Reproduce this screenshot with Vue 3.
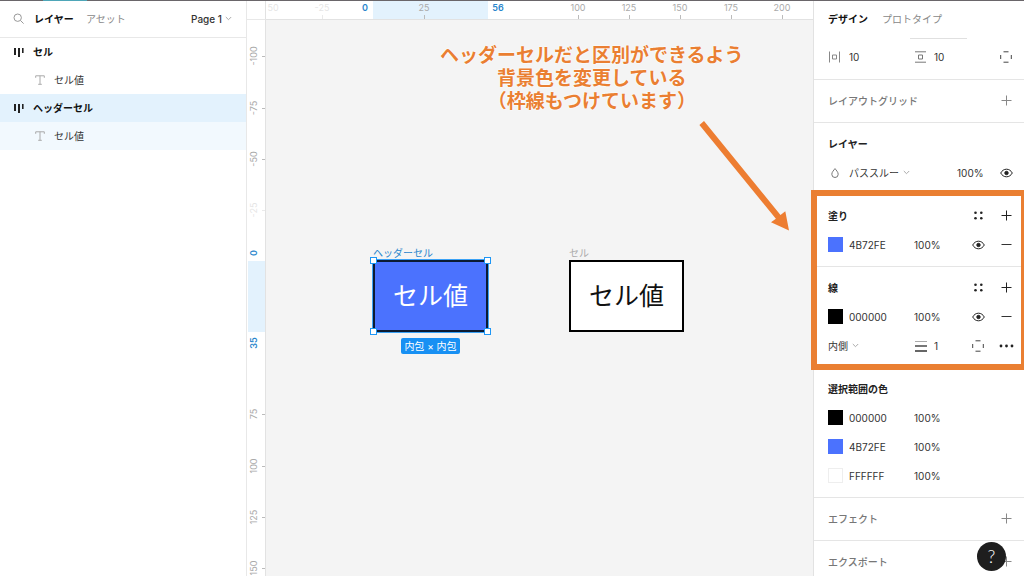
<script setup>
const layers = [
  { name: 'セル', type: 'frame', state: '' },
  { name: 'セル値', type: 'text', state: '' },
  { name: 'ヘッダーセル', type: 'frame', state: 'selected' },
  { name: 'セル値', type: 'text', state: 'within' },
]

const scale = 2.046
const originX = 107
const originY = 241
const columnMarks = [-25, 25, 100, 125, 150, 175, 200].map((v) => ({
  v,
  at: Math.round(originX + v * scale),
  faint: v < 0,
}))
const rowMarks = [-100, -75, -50, -25, 75, 100, 125, 150].map((v) => ({
  v,
  at: Math.round(originY + v * scale),
  faint: v === -25,
}))

const paints = [
  { title: '塗り', hex: '4B72FE', tone: 'blue' },
  { title: '線', hex: '000000', tone: 'black' },
]
const selectionColors = [
  { hex: '000000', tone: 'black' },
  { hex: '4B72FE', tone: 'blue' },
  { hex: 'FFFFFF', tone: 'white' },
]
</script>

<template>
  <div class="app">
    <div class="topline"><span></span></div>

    <div class="workspace">
      <aside class="layers">
        <header class="layers-head">
          <button class="plain search" aria-label="検索">
            <svg width="12" height="12" viewBox="0 0 12 12" fill="none" stroke="#999"><circle cx="4.7" cy="4.7" r="3.7" /><path d="M7.5 7.5 10.6 10.6" /></svg>
          </button>
          <button class="plain tab active">レイヤー</button>
          <button class="plain tab">アセット</button>
          <button class="plain page">
            Page 1
            <svg width="7" height="5" viewBox="0 0 7 5" fill="none" stroke="#aaa"><path d="M.8 1 3.5 3.7 6.2 1" /></svg>
          </button>
        </header>
        <ul class="tree">
          <li v-for="(l, i) in layers" :key="i">
            <button class="plain layer" :class="[l.type, l.state]">
              <svg v-if="l.type === 'frame'" width="10" height="10" viewBox="0 0 10 10" fill="#222"><path d="M0 1h2v7H0zM4 1h2v9H4zM8 1h1.6v5H8z" /></svg>
              <svg v-else width="10" height="10" viewBox="0 0 10 10" fill="none" stroke="#aaa"><path d="M.7 2.8V.8h8.6v2M5 .8v8.4M3.2 9.3h3.6" /></svg>
              {{ l.name }}
            </button>
          </li>
        </ul>
      </aside>

      <main class="stage">
        <div class="corner"></div>
        <svg class="ruler ruler-top">
          <rect class="range" x="107" y="0" width="115" height="18" />
          <text class="faint" x="7" y="10">50</text>
          <g v-for="m in columnMarks" :key="m.v" :class="{ faint: m.faint }">
            <text :x="m.at" y="10">{{ m.v }}</text>
            <path :d="`M${m.at + 0.5} 14v4`" />
          </g>
          <text class="bound" x="99" y="10">0</text>
          <text class="bound" x="232" y="10">56</text>
        </svg>
        <svg class="ruler ruler-left">
          <rect class="range" x="1" y="241" width="17" height="71" />
          <g v-for="m in rowMarks" :key="m.v" :class="{ faint: m.faint }">
            <text :transform="`translate(10 ${m.at}) rotate(-90)`">{{ m.v }}</text>
            <path :d="`M15 ${m.at + 0.5}h3`" />
          </g>
          <text class="bound" transform="translate(10 233) rotate(-90)">0</text>
          <text class="bound" transform="translate(10 323) rotate(-90)">35</text>
        </svg>

        <div class="canvas">
          <p class="note">ヘッダーセルだと区別ができるよう<br />背景色を変更している<br />（枠線もつけています）</p>
          <svg class="arrow" width="94" height="114" viewBox="0 0 94 114">
            <path d="M.4 4.9 5 1.1 81.5 95l4.8-3.7L90 110.5l-18-8.2 4.9-3.5z" />
          </svg>

          <div class="node header-cell">
            <span class="node-name">ヘッダーセル</span>
            <span class="cell-text">セル値</span>
            <i class="handle tl"></i><i class="handle tr"></i><i class="handle bl"></i><i class="handle br"></i>
            <span class="size">内包 × 内包</span>
          </div>
          <div class="node plain-cell">
            <span class="node-name">セル</span>
            <span class="cell-text">セル値</span>
          </div>
        </div>
      </main>

      <aside class="inspector">
        <nav class="tabs">
          <button class="plain tab active">デザイン</button>
          <button class="plain tab">プロトタイプ</button>
        </nav>

        <section class="spacing">
          <div class="field-edge"></div>
          <div class="row gaps">
            <svg width="14" height="12" viewBox="0 0 14 12" fill="none" stroke="#888"><path d="M1.5.5v11M11.5.5v11M4.5 4h4v4h-4z" /></svg>
            <input aria-label="水平の間隔" value="10" />
            <svg width="14" height="12" viewBox="0 0 14 12" fill="none" stroke="#777"><path d="M1 .8h11M1 11.2h11M4.5 4h4v4h-4z" /></svg>
            <input aria-label="垂直の間隔" value="10" />
            <button class="plain icon" aria-label="個別の余白">
              <svg width="12" height="12" viewBox="0 0 12 12" fill="none" stroke="#444"><path d="M3.5.8h5M3.5 11.2h5M.7 4v4M11.3 4v4" /></svg>
            </button>
          </div>
        </section>

        <section>
          <div class="row head">
            <h2 class="muted">レイアウトグリッド</h2>
            <button class="plain icon" aria-label="グリッドを追加"><svg width="11" height="11" viewBox="0 0 11 11" stroke="#888"><path d="M5.5.5v10M.5 5.5h10" /></svg></button>
          </div>
        </section>

        <section>
          <div class="row head"><h2>レイヤー</h2></div>
          <div class="row blend">
            <svg width="14" height="12" viewBox="0 0 14 12" fill="none" stroke="#777"><path d="M7 1.6C5.900 3.200 3.800 5 3.800 7.300a3.200 3.200 0 0 0 6.400 0C10.200 5 8.100 3.200 7 1.600z" /></svg>
            <select aria-label="ブレンドモード"><option>パススルー</option></select>
            <svg class="chevron" width="7" height="5" viewBox="0 0 7 5" fill="none" stroke="#aaa"><path d="M.8 1 3.5 3.7 6.2 1" /></svg>
            <input aria-label="不透明度" value="100%" />
            <button class="plain icon" aria-label="表示">
              <svg width="13" height="10" viewBox="0 0 13 10" fill="none" stroke="#222"><path d="M.7 5C2 2.600 4 1.200 6.500 1.200S11 2.600 12.300 5C11 7.400 9 8.800 6.500 8.800S2 7.400.7 5z" /><circle cx="6.5" cy="5" r="1.7" fill="#222" /></svg>
            </button>
          </div>
        </section>

        <div class="highlighted">
          <section v-for="part in paints" :key="part.title">
            <div class="row head">
              <h2>{{ part.title }}</h2>
              <button class="plain icon" aria-label="スタイル"><svg width="9" height="9" viewBox="0 0 9 9" fill="#222"><circle cx="1.5" cy="1.7" r="1.3" /><circle cx="7.3" cy="1.7" r="1.3" /><circle cx="1.5" cy="7.3" r="1.3" /><circle cx="7.3" cy="7.3" r="1.3" /></svg></button>
              <button class="plain icon" aria-label="追加"><svg width="11" height="11" viewBox="0 0 11 11" stroke="#222"><path d="M5.5.5v10M.5 5.5h10" /></svg></button>
            </div>
            <div class="row color">
              <button class="plain swatch" :class="part.tone" aria-label="色"></button>
              <input :aria-label="part.title + 'の色'" :value="part.hex" />
              <input :aria-label="part.title + 'の不透明度'" value="100%" />
              <button class="plain icon" aria-label="表示">
                <svg width="13" height="10" viewBox="0 0 13 10" fill="none" stroke="#222"><path d="M.7 5C2 2.600 4 1.200 6.500 1.200S11 2.600 12.300 5C11 7.400 9 8.800 6.500 8.800S2 7.400.7 5z" /><circle cx="6.5" cy="5" r="1.7" fill="#222" /></svg>
              </button>
              <button class="plain icon" aria-label="削除"><svg width="11" height="11" viewBox="0 0 11 11" stroke="#333"><path d="M.5 5.5h10" /></svg></button>
            </div>
            <div v-if="part.title === '線'" class="row stroke">
              <span class="align">
                <select aria-label="線の位置"><option>内側</option></select>
                <svg class="chevron" width="7" height="5" viewBox="0 0 7 5" fill="none" stroke="#aaa"><path d="M.8 1 3.5 3.7 6.2 1" /></svg>
              </span>
              <svg width="14" height="12" viewBox="0 0 14 12" stroke="#666"><path d="M1 1.5h12" stroke="#aaa" /><path d="M1 6h12" stroke-width="2" stroke="#777" /><path d="M1 11h12" stroke-width="2" /></svg>
              <input aria-label="線の太さ" value="1" />
              <button class="plain icon" aria-label="個別の線">
                <svg width="12" height="12" viewBox="0 0 12 12" fill="none" stroke="#444"><path d="M3.5.8h5M3.5 11.2h5M.7 4v4M11.3 4v4" /></svg>
              </button>
              <button class="plain icon" aria-label="詳細"><svg width="15" height="4" viewBox="0 0 15 4" fill="#222"><circle cx="2" cy="2" r="1.4" /><circle cx="7.5" cy="2" r="1.4" /><circle cx="13" cy="2" r="1.4" /></svg></button>
            </div>
          </section>
        </div>

        <section>
          <div class="row head"><h2>選択範囲の色</h2></div>
          <div v-for="c in selectionColors" :key="c.hex" class="row color">
            <button class="plain swatch" :class="c.tone" aria-label="色"></button>
            <input aria-label="カラーコード" :value="c.hex" />
            <input aria-label="不透明度" value="100%" />
          </div>
        </section>

        <section v-for="title in ['エフェクト', 'エクスポート']" :key="title">
          <div class="row head">
            <h2 class="muted">{{ title }}</h2>
            <button class="plain icon" aria-label="追加"><svg width="11" height="11" viewBox="0 0 11 11" stroke="#888"><path d="M5.5.5v10M.5 5.5h10" /></svg></button>
          </div>
        </section>
      </aside>
    </div>

    <button class="plain help" aria-label="ヘルプ">?</button>
  </div>
</template>

<style>
body {
  background: #fff;
}
</style>

<style scoped>
.app {
  position: relative;
  display: flex;
  flex-direction: column;
  height: 100vh;
  overflow: hidden;
  font-family: Inter, "Noto Sans CJK JP", sans-serif;
  font-size: 10px;
  line-height: 16px;
  color: #333;
}
.app * {
  box-sizing: border-box;
}
.topline {
  flex: none;
  height: 1px;
  padding-left: 43px;
  background: #6a666a;
}
.topline span {
  display: block;
  width: 44px;
  height: 1px;
  background: #4ea6b8;
}
.workspace {
  display: flex;
  flex: 1;
  min-height: 0;
}
.plain {
  margin: 0;
  padding: 0;
  border: 0;
  background: none;
  font: inherit;
  color: inherit;
  text-align: left;
}
svg {
  display: block;
  flex: none;
}

/* layer list */
.layers {
  flex: none;
  width: 247px;
  border-right: 1px solid #e8e8e8;
}
.layers-head {
  display: flex;
  align-items: center;
  height: 37px;
  padding: 0 14px 1px 13px;
  border-bottom: 1px solid #e8e8e8;
}
.search {
  width: 21px;
}
.tab {
  color: #888;
}
.tab.active {
  color: #111;
  font-weight: 700;
}
.layers .tab {
  width: 52px;
}
.page {
  display: flex;
  align-items: center;
  gap: 3px;
  margin-left: auto;
  font-weight: 500;
}
.tree {
  margin: 0;
  padding: 0;
  list-style: none;
}
.layer {
  display: flex;
  align-items: center;
  gap: 9px;
  width: 100%;
  height: 28px;
  padding-left: 14px;
}
.layer.frame {
  color: #111;
  font-weight: 700;
}
.layer.text {
  padding-left: 35px;
}
.layer.selected {
  background: #e3f2fd;
}
.layer.within {
  background: #f2f9fe;
}

/* stage */
.stage {
  display: grid;
  flex: 1;
  min-width: 0;
  grid-template-columns: 19px 1fr;
  grid-template-rows: 19px 1fr;
}
.corner {
  border-right: 1px solid #e2e2e2;
  border-bottom: 1px solid #e8e8e8;
}
.ruler {
  width: 100%;
  height: 100%;
  min-height: 0;
  overflow: hidden;
  font-size: 9px;
  fill: #aaa;
  stroke: none;
}
.ruler-top {
  border-bottom: 1px solid #e2e2e2;
}
.ruler-left {
  border-right: 1px solid #e2e2e2;
}
.ruler text {
  text-anchor: middle;
}
.ruler path {
  stroke: #bbb;
}
.ruler .faint {
  opacity: 0.3;
}
.ruler .range {
  fill: #e3f2fd;
}
.ruler .bound {
  fill: #2a86cc;
  font-weight: 600;
}
.canvas {
  position: relative;
  min-width: 0;
  background: #f4f4f4;
}
.note {
  position: absolute;
  left: 174px;
  top: 24px;
  margin: 0;
  color: #ea7f32;
  font-size: 19px;
  font-weight: 700;
  line-height: 23px;
  text-align: center;
  white-space: nowrap;
  text-shadow: 0 0 2px #fff, 0 0 2px #fff;
}
.arrow {
  position: absolute;
  left: 433px;
  top: 100px;
  fill: #ed7d31;
}
.node {
  position: absolute;
  top: 240px;
  display: flex;
  align-items: center;
  justify-content: center;
  width: 115px;
  height: 72px;
}
.header-cell {
  left: 107px;
  border: 2px solid #0b1b33;
  outline: 1px solid #3ba2f5;
  background: #4b72fe;
  color: #fff;
}
.plain-cell {
  left: 303px;
  border: 2px solid #000;
  background: #fff;
  color: #111;
}
.cell-text {
  font-size: 25px;
  line-height: 32px;
}
.node-name {
  position: absolute;
  bottom: 70px;
  left: -2px;
  color: #aaa;
  line-height: 13px;
  white-space: nowrap;
}
.header-cell .node-name {
  color: #2a86cc;
}
.handle {
  position: absolute;
  width: 7px;
  height: 7px;
  border: 1px solid #1e96f5;
  background: #fff;
}
.tl,
.tr {
  top: -5px;
}
.bl,
.br {
  bottom: -5px;
}
.tl,
.bl {
  left: -5px;
}
.tr,
.br {
  right: -5px;
}
.size {
  position: absolute;
  top: 76px;
  padding: 0 3px;
  border-radius: 2px;
  background: #1890f3;
  white-space: nowrap;
}

/* inspector */
.inspector {
  position: relative;
  flex: none;
  width: 211px;
  border-left: 1px solid #e2e2e2;
  background: #fff;
}
.tabs {
  display: flex;
  align-items: center;
  gap: 14px;
  height: 37px;
  padding: 0 14px 2px;
}
section {
  padding: 6px 0 7px;
  border-bottom: 1px solid #e5e5e5;
}
.spacing {
  padding: 0 0 8px;
}
.field-edge {
  width: 57px;
  height: 1px;
  margin: 0 0 3px 96px;
  background: #e0e0e0;
}
.row {
  display: grid;
  align-items: center;
  height: 29px;
  padding: 0 4px 0 14px;
}
.head {
  grid-template-columns: 1fr;
  grid-auto-flow: column;
  grid-auto-columns: 28px;
}
.gaps {
  grid-template-columns: 21px 65px 20px 1fr 28px;
}
.blend {
  grid-template-columns: 21px auto 1fr 35px 28px;
}
.color {
  grid-template-columns: 21px 65px 1fr 28px 28px;
}
.stroke {
  grid-template-columns: 86px 20px 1fr 28px 28px;
}
h2 {
  margin: 0;
  color: #222;
  font-size: 10px;
  font-weight: 700;
}
h2.muted {
  color: #777;
  font-weight: 500;
}
input,
select {
  width: 100%;
  min-width: 0;
  height: 16px;
  margin: 0;
  padding: 0;
  border: 0;
  outline: 0;
  background: none;
  color: #333;
  font: inherit;
  appearance: none;
}
select {
  width: auto;
}
.chevron {
  margin-left: 4px;
}
.align {
  display: flex;
  align-items: center;
}
.icon {
  display: flex;
  align-items: center;
  justify-content: center;
  width: 28px;
  height: 28px;
}
.swatch {
  width: 15px;
  height: 15px;
}
.black {
  background: #000;
}
.blue {
  background: #4b72fe;
}
.white {
  border: 1px solid #eee;
  background: #fff;
}
.highlighted {
  position: relative;
}
.highlighted::after {
  content: "";
  position: absolute;
  inset: -5px -3px -2px -3px;
  border: 6px solid #ea7f32;
  pointer-events: none;
}
.help {
  position: absolute;
  right: 18px;
  bottom: 5px;
  width: 29px;
  height: 29px;
  border-radius: 50%;
  background: #1e1e1e;
  color: #fff;
  font-family: Lato, sans-serif;
  font-size: 18px;
  font-weight: 300;
  line-height: 29px;
  text-align: center;
}
</style>
